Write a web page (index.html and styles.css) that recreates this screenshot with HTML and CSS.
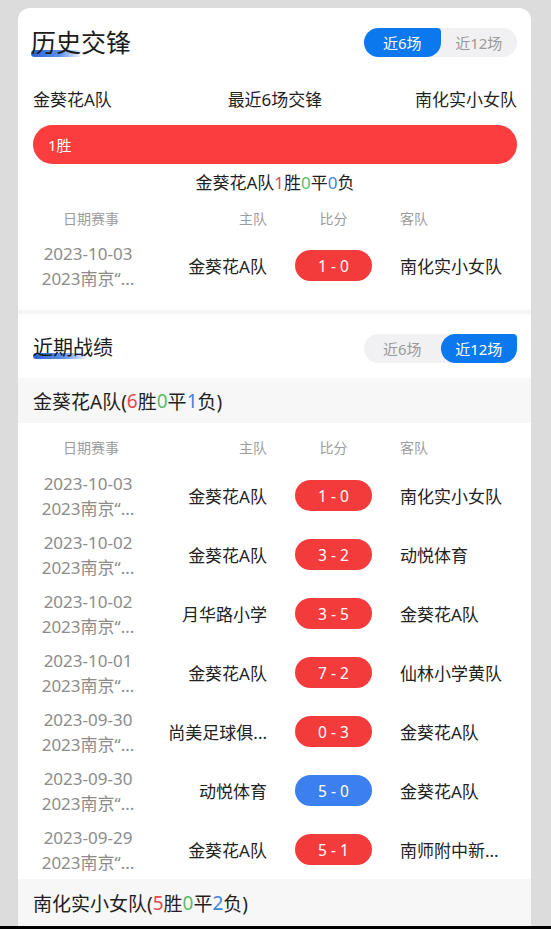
FILE: index.html
```html
<!DOCTYPE html>
<html lang="zh-CN">
<head>
  <meta charset="UTF-8" />
  <meta name="viewport" content="width=device-width, initial-scale=1" />
  <title>历史交锋</title>
  <link rel="stylesheet" href="styles.css">
</head>
<body>
  <div class="card">
    <section class="block h2h">
      <div class="sec-head">
        <h2 class="title title-big">历史交锋</h2>
        <div class="tabs">
          <span class="tab active">近6场</span>
          <span class="tab">近12场</span>
        </div>
      </div>

      <div class="teams">
        <span>金葵花A队</span>
        <span class="mid">最近6场交锋</span>
        <span class="right">南化实小女队</span>
      </div>

      <div class="bar"><span>1胜</span></div>
      <p class="summary">金葵花A队<b class="w">1</b>胜<b class="d">0</b>平<b class="l">0</b>负</p>

      <div class="row thead">
        <div class="date">日期赛事</div>
        <div class="home">主队</div>
        <div class="score">比分</div>
        <div class="away">客队</div>
      </div>
      <div class="row match">
        <div class="date"><span>2023-10-03</span><span>2023南京“...</span></div>
        <div class="home">金葵花A队</div>
        <div class="score"><span class="pill">1 - 0</span></div>
        <div class="away">南化实小女队</div>
      </div>
    </section>

    <section class="block recent">
      <div class="sec-head">
        <h2 class="title title-small">近期战绩</h2>
        <div class="tabs">
          <span class="tab">近6场</span>
          <span class="tab active">近12场</span>
        </div>
      </div>

      <div class="team-band band-top">金葵花A队(<b class="w">6</b>胜<b class="d">0</b>平<b class="l">1</b>负)</div>

      <div class="row thead">
        <div class="date">日期赛事</div>
        <div class="home">主队</div>
        <div class="score">比分</div>
        <div class="away">客队</div>
      </div>
      <div class="matches">
        <div class="row match">
          <div class="date"><span>2023-10-03</span><span>2023南京“...</span></div>
          <div class="home">金葵花A队</div>
          <div class="score"><span class="pill">1 - 0</span></div>
          <div class="away">南化实小女队</div>
        </div>
        <div class="row match">
          <div class="date"><span>2023-10-02</span><span>2023南京“...</span></div>
          <div class="home">金葵花A队</div>
          <div class="score"><span class="pill">3 - 2</span></div>
          <div class="away">动悦体育</div>
        </div>
        <div class="row match">
          <div class="date"><span>2023-10-02</span><span>2023南京“...</span></div>
          <div class="home">月华路小学</div>
          <div class="score"><span class="pill">3 - 5</span></div>
          <div class="away">金葵花A队</div>
        </div>
        <div class="row match">
          <div class="date"><span>2023-10-01</span><span>2023南京“...</span></div>
          <div class="home">金葵花A队</div>
          <div class="score"><span class="pill">7 - 2</span></div>
          <div class="away">仙林小学黄队</div>
        </div>
        <div class="row match">
          <div class="date"><span>2023-09-30</span><span>2023南京“...</span></div>
          <div class="home">尚美足球俱...</div>
          <div class="score"><span class="pill">0 - 3</span></div>
          <div class="away">金葵花A队</div>
        </div>
        <div class="row match">
          <div class="date"><span>2023-09-30</span><span>2023南京“...</span></div>
          <div class="home">动悦体育</div>
          <div class="score"><span class="pill lose">5 - 0</span></div>
          <div class="away">金葵花A队</div>
        </div>
        <div class="row match">
          <div class="date"><span>2023-09-29</span><span>2023南京“...</span></div>
          <div class="home">金葵花A队</div>
          <div class="score"><span class="pill">5 - 1</span></div>
          <div class="away">南师附中新...</div>
        </div>
      </div>

      <div class="team-band band-bottom">南化实小女队(<b class="w">5</b>胜<b class="d">0</b>平<b class="l">2</b>负)</div>
    </section>
  </div>
  <div class="edge"></div>
</body>
</html>
```

FILE: styles.css
```css
html, body {
  margin: 0;
  padding: 0;
}
body {
  font-family: "Noto Sans", "Noto Sans CJK SC", sans-serif;
  background: #dcdcdc;
  color: #222;
  height: 929px;
  overflow: hidden;
}
b {
  font-weight: normal;
}
.card {
  margin: 8px 20px 0 18px;
  background: #fff;
  border-radius: 12px 12px 0 0;
}
.block {
  padding: 19px 14px 0 15px;
}
.h2h {
  padding-bottom: 15px;
}
.recent {
  border-top: 4px solid #f5f5f5;
}
.sec-head {
  display: flex;
  justify-content: space-between;
  align-items: center;
  height: 30px;
}
.title {
  margin: 0;
  position: relative;
  z-index: 0;
  font-weight: normal;
  line-height: 30px;
  color: #1c1c1c;
}
.title::before {
  content: '';
  position: absolute;
  z-index: -1;
  border-radius: 4px;
  background: linear-gradient(90deg, #2a62d4 0%, #5d92ea 55%, rgba(120, 170, 240, 0) 100%);
}
.title-big {
  font-size: 25px;
  margin-left: -2px;
}
.title-big::before {
  left: 0;
  bottom: 0;
  width: 52px;
  height: 7px;
}
.title-small {
  font-size: 20px;
}
.title-small::before {
  left: 0;
  bottom: 4px;
  width: 56px;
  height: 6px;
}
.tabs {
  display: flex;
  width: 153px;
  height: 29px;
  background: #f1f1f3;
  border-radius: 15px;
}
.tab {
  flex: 1;
  display: flex;
  align-items: center;
  justify-content: center;
  font-size: 15px;
  color: #9a9a9a;
}
.tab.active {
  background: #0b78ee;
  color: #fff;
  border-radius: 15px 4px 15px 15px;
}
.teams {
  display: grid;
  grid-template-columns: 1fr auto 1fr;
  margin-top: 31px;
  font-size: 17px;
  line-height: 24px;
  color: #1f1f1f;
}
.teams .right {
  text-align: right;
}
.bar {
  margin-top: 13px;
  height: 39px;
  background: #fc3d3e;
  border-radius: 20px;
  color: #fff;
  font-size: 15px;
  display: flex;
  align-items: center;
  padding-left: 15px;
}
.summary {
  margin: 7px 0 0;
  text-align: center;
  font-size: 17px;
  line-height: 24px;
  color: #1f1f1f;
}
.w {
  color: #e24b4b;
}
.d {
  color: #5cbd6a;
}
.l {
  color: #3a86d8;
}
.row {
  display: grid;
  grid-template-columns: 112px 122px 133px 1fr;
  align-items: center;
}
.thead {
  font-size: 14px;
  line-height: 20px;
  color: #9c9c9c;
  margin-top: 14px;
}
.recent .thead {
  margin-top: 15px;
}
.thead .date {
  text-align: center;
  padding-left: 4px;
}
.thead .home {
  text-align: right;
}
.thead .score {
  text-align: center;
}
.match {
  height: 59px;
  margin-top: 7px;
  font-size: 17px;
}
.matches {
  margin-top: 8px;
}
.matches .match {
  margin-top: 0;
}
.match .date {
  display: flex;
  flex-direction: column;
  align-items: center;
  padding-right: 2px;
  color: #8c8c8c;
  line-height: 25px;
}
.match .home {
  text-align: right;
  white-space: nowrap;
}
.match .score {
  display: flex;
  justify-content: center;
}
.pill {
  width: 77px;
  height: 31px;
  border-radius: 16px;
  background: #f43b3c;
  color: #fff;
  font-size: 15.5px;
  display: flex;
  align-items: center;
  justify-content: center;
  white-space: pre;
}
.pill.lose {
  background: #3c80ef;
}
.match .away {
  white-space: nowrap;
}
.team-band {
  margin: 0 -14px 0 -15px;
  padding-left: 15px;
  background: #f7f7f7;
  font-size: 19px;
  color: #1f1f1f;
  display: flex;
  align-items: center;
}
.band-top {
  margin-top: 15px;
  height: 45px;
}
.band-bottom {
  height: 47px;
}
.edge {
  height: 3px;
  background: #000;
}
```
